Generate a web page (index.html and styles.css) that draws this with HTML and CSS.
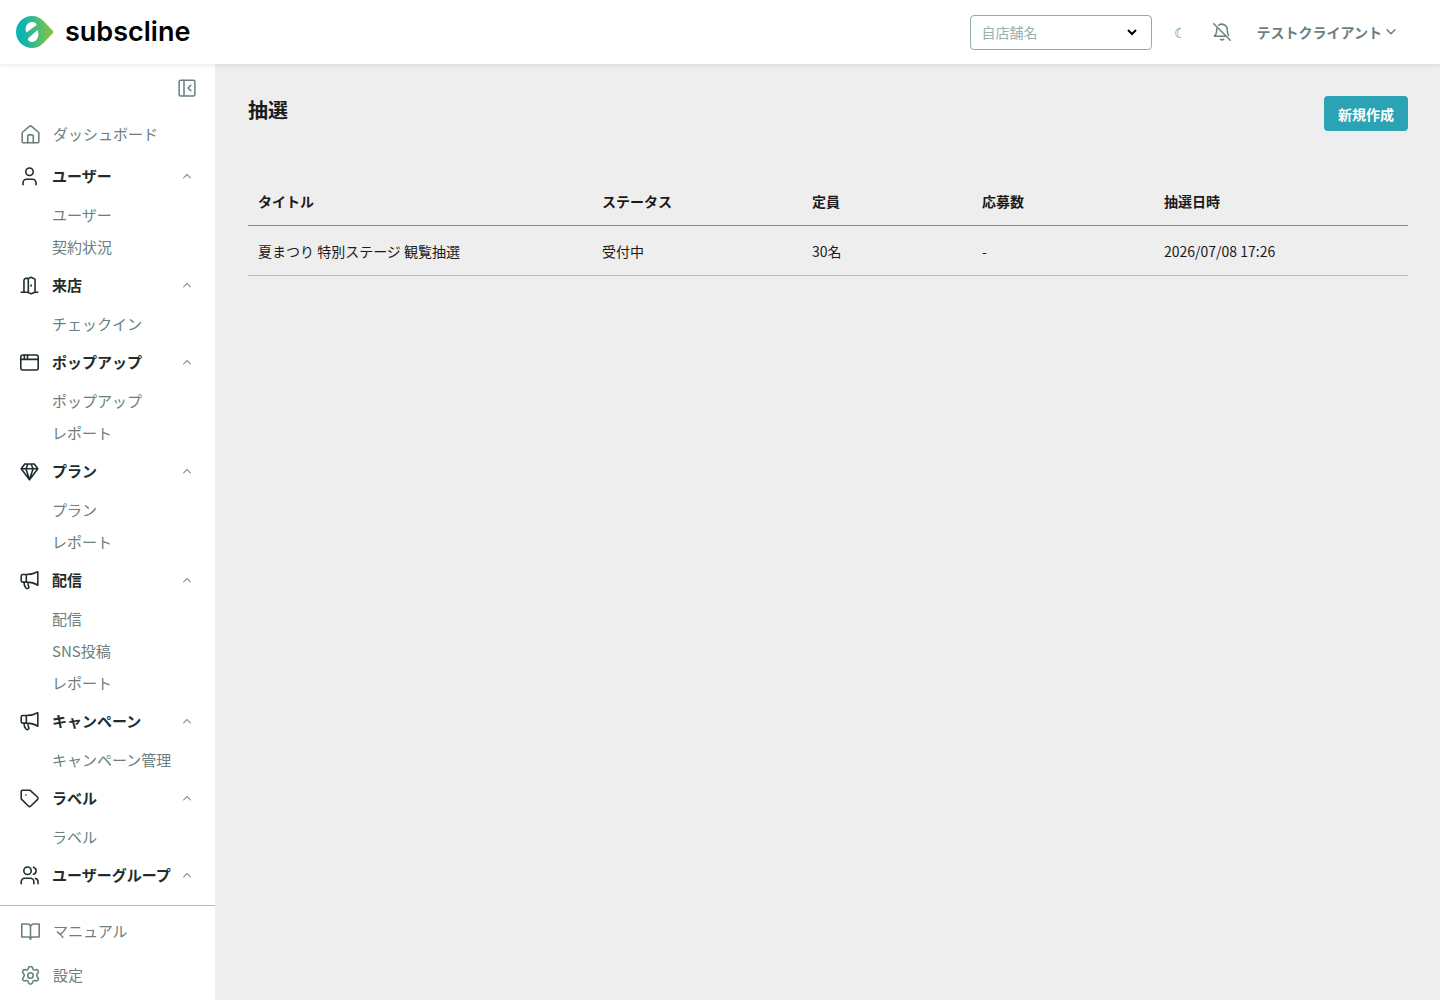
FILE: index.html
```html
<!DOCTYPE html>
<html lang="ja">
<head>
    <meta charset="UTF-8">
    <meta name="viewport" content="width=device-width, initial-scale=1.0">
    <title>抽選 | subscline</title>
    <link rel="stylesheet" href="styles.css">
</head>
<body>

    <!-- Icons -->
    <svg class="sprite" aria-hidden="true">
        <symbol id="icon-chevron" viewBox="0 0 24 24"><path d="M4 16.500l8-8 8 8"/></symbol>
        <symbol id="icon-home" viewBox="0 0 24 24"><path d="M1.500 9.500 10.600 1.700a2 2 0 0 1 2.800 0l9.100 7.800V21a1.500 1.500 0 0 1-1.500 1.500H3A1.500 1.500 0 0 1 1.500 21z"/><path d="M8.500 22.500V14a1.500 1.500 0 0 1 1.500-1.500h4a1.500 1.500 0 0 1 1.500 1.500v8.500"/></symbol>
        <symbol id="icon-user" viewBox="0 0 24 24"><circle cx="12" cy="6" r="4.700"/><path d="M3.800 22.500v-2.500a4.500 4.500 0 0 1 4.500-4.500h7.400a4.500 4.500 0 0 1 4.500 4.500v2.500"/></symbol>
        <symbol id="icon-door" viewBox="0 0 24 24"><path d="M1.500 20.500h9M19 20.500h3.500M5 20.500V5.500A2.500 2.500 0 0 1 7.500 3H10M11 3l3-1.500 5 2.500v16.500L14 22.500l-3.500-1.500V3.500"/><path d="M14 11.500v1"/></symbol>
        <symbol id="icon-window" viewBox="0 0 24 24"><rect x="1" y="2.500" width="22" height="19" rx="2.500"/><path d="M1 8h22M5.500 2.500V8M9.500 2.500V8"/></symbol>
        <symbol id="icon-gem" viewBox="0 0 24 24"><path d="M6 2.500h12l4.500 6L12 22.500 1.500 8.500zM1.500 8.500h21M10 2.500l-2.500 6 4.500 14 4.500-14-2.500-6"/></symbol>
        <symbol id="icon-megaphone" viewBox="0 0 24 24"><path d="M8 4.500H3.500a2 2 0 0 0-2 2V12a2 2 0 0 0 2 2H8M8 4.500C13 4.500 18 3.500 22.500 1v17C18 15 13 14 8 14zM8 4.500V14M5 14c0 2.500.8 5.500 2.500 7.500 1.500 1.500 4.500.2 3.500-1.900C10.200 18 10 16.500 10 14.500"/></symbol>
        <symbol id="icon-tag" viewBox="0 0 24 24"><path d="M12.500 1.500H3A1.500 1.500 0 0 0 1.500 3v9.500l9 9a2.300 2.300 0 0 0 3.200 0l8.300-8.100a2.300 2.300 0 0 0 0-3.300z"/><path d="M7.500 7.500v.2"/></symbol>
        <symbol id="icon-users" viewBox="0 0 24 24"><circle cx="9.500" cy="6" r="4.700"/><path d="M1.500 22.500v-2.500A4.500 4.500 0 0 1 6 15.500h7a4.500 4.500 0 0 1 4.500 4.500v2.500M22.800 22.500v-2.500a4.500 4.500 0 0 0-3.300-4.300M17 1.500a4.700 4.700 0 0 1 0 9"/></symbol>
        <symbol id="icon-book" viewBox="0 0 24 24"><path d="M1 2.500h7a4 4 0 0 1 4 4V22a3 3 0 0 0-3-3H1zM23 2.500h-7a4 4 0 0 0-4 4V22a3 3 0 0 1 3-3h8z"/></symbol>
        <symbol id="icon-gear" viewBox="0 0 24 24"><circle cx="12" cy="12" r="3.500"/><path d="M9.500 2.200c.8-2.200 4.200-2.200 5 0l.5 1.500a2 2 0 0 0 2.300 1.300l1.500-.3c2.400-.5 4.100 2.400 2.500 4.300l-1 1.300a2.300 2.300 0 0 0 0 2.800l1 1.300c1.600 1.900-.1 4.800-2.500 4.300l-1.500-.3a2 2 0 0 0-2.300 1.300l-.5 1.500c-.8 2.200-4.200 2.200-5 0l-.5-1.500a2 2 0 0 0-2.300-1.300l-1.500.3c-2.400.5-4.100-2.400-2.500-4.300l1-1.300a2.300 2.300 0 0 0 0-2.800l-1-1.300c-1.600-1.900.1-4.800 2.500-4.300l1.500.3a2 2 0 0 0 2.300-1.300z"/></symbol>
        <symbol id="icon-collapse" viewBox="0 0 24 24"><rect x="1.500" y="1.500" width="21" height="21" rx="2"/><path d="M8 1.500v21M17 8.500 13.500 12l3.500 3.500"/></symbol>
        <symbol id="icon-bell-off" viewBox="0 0 24 24"><path d="M1 1l22 22M7.500 3A7.200 7.200 0 0 1 19 8.500c0 3.500.3 5.500 1.500 8M5 7.500c0 4.500-.5 7.500-3 10h14.500M10 21.700c1 1.300 3 1.300 4 0"/></symbol>
    </svg>

    <!-- Header -->
    <header class="header">
        <a href="#" class="logo">
            <svg class="logo-mark" viewBox="0 0 38 32" aria-hidden="true">
                <defs>
                    <linearGradient id="logo-fill" x1="0" y1="0" x2="1" y2="0">
                        <stop offset="0.150" stop-color="#08b4b4"/>
                        <stop offset="1" stop-color="#8bc540"/>
                    </linearGradient>
                </defs>
                <path fill="url(#logo-fill)" d="M16 0c5 0 8.500 2 11.500 5l9 9.500a2 2 0 0 1 0 3L27.500 27C24.500 30 21 32 16 32A16 16 0 0 1 16 0z"/>
                <path fill="#fff" d="M10.500 16.500C8 11 11.500 6 16.500 6c2.500 0 4 1.500 4.200 3zM21.500 14C24 19.500 21 26 16 26c-2.500 0-4.300-1.800-4-3.500z"/>
            </svg>
            <span>subscline</span>
        </a>
        <div class="header-menu">
            <select class="store-select" aria-label="自店舗名">
                <option>自店舗名</option>
            </select>
            <button class="icon-button theme-button" aria-label="テーマ切替">☾</button>
            <button class="icon-button" aria-label="通知"><svg class="icon"><use href="#icon-bell-off"/></svg></button>
            <button class="account-button">テストクライアント<svg class="chevron down"><use href="#icon-chevron"/></svg></button>
        </div>
    </header>

    <div class="layout">
        <!-- Sidebar -->
        <aside class="sidebar">
            <div class="sidebar-top">
                <button class="icon-button" aria-label="メニューを閉じる"><svg class="icon"><use href="#icon-collapse"/></svg></button>
            </div>
            <nav class="menu">
                <a href="#" class="menu-link"><svg class="icon"><use href="#icon-home"/></svg>ダッシュボード</a>

                <button class="menu-head"><svg class="icon"><use href="#icon-user"/></svg>ユーザー<svg class="chevron"><use href="#icon-chevron"/></svg></button>
                <ul>
                    <li><a href="#">ユーザー</a></li>
                    <li><a href="#">契約状況</a></li>
                </ul>

                <button class="menu-head"><svg class="icon"><use href="#icon-door"/></svg>来店<svg class="chevron"><use href="#icon-chevron"/></svg></button>
                <ul>
                    <li><a href="#">チェックイン</a></li>
                </ul>

                <button class="menu-head"><svg class="icon"><use href="#icon-window"/></svg>ポップアップ<svg class="chevron"><use href="#icon-chevron"/></svg></button>
                <ul>
                    <li><a href="#">ポップアップ</a></li>
                    <li><a href="#">レポート</a></li>
                </ul>

                <button class="menu-head"><svg class="icon"><use href="#icon-gem"/></svg>プラン<svg class="chevron"><use href="#icon-chevron"/></svg></button>
                <ul>
                    <li><a href="#">プラン</a></li>
                    <li><a href="#">レポート</a></li>
                </ul>

                <button class="menu-head"><svg class="icon"><use href="#icon-megaphone"/></svg>配信<svg class="chevron"><use href="#icon-chevron"/></svg></button>
                <ul>
                    <li><a href="#">配信</a></li>
                    <li><a href="#">SNS投稿</a></li>
                    <li><a href="#">レポート</a></li>
                </ul>

                <button class="menu-head"><svg class="icon"><use href="#icon-megaphone"/></svg>キャンペーン<svg class="chevron"><use href="#icon-chevron"/></svg></button>
                <ul>
                    <li><a href="#">キャンペーン管理</a></li>
                </ul>

                <button class="menu-head"><svg class="icon"><use href="#icon-tag"/></svg>ラベル<svg class="chevron"><use href="#icon-chevron"/></svg></button>
                <ul>
                    <li><a href="#">ラベル</a></li>
                </ul>

                <button class="menu-head"><svg class="icon"><use href="#icon-users"/></svg>ユーザーグループ<svg class="chevron"><use href="#icon-chevron"/></svg></button>
            </nav>
            <div class="sidebar-bottom">
                <a href="#" class="menu-link"><svg class="icon"><use href="#icon-book"/></svg>マニュアル</a>
                <a href="#" class="menu-link"><svg class="icon"><use href="#icon-gear"/></svg>設定</a>
            </div>
        </aside>

        <!-- Main Content -->
        <main class="content">
            <div class="page-head">
                <h1>抽選</h1>
                <button class="create-button">新規作成</button>
            </div>
            <table>
                <thead>
                    <tr>
                        <th class="col-title">タイトル</th>
                        <th class="col-status">ステータス</th>
                        <th class="col-capacity">定員</th>
                        <th class="col-entries">応募数</th>
                        <th>抽選日時</th>
                    </tr>
                </thead>
                <tbody>
                    <tr>
                        <td>夏まつり 特別ステージ 観覧抽選</td>
                        <td>受付中</td>
                        <td>30名</td>
                        <td>-</td>
                        <td>2026/07/08 17:26</td>
                    </tr>
                </tbody>
            </table>
        </main>
    </div>

</body>
</html>
```
FILE: styles.css
```css
* {
    box-sizing: border-box;
}

body {
    margin: 0;
    height: 100vh;
    display: flex;
    flex-direction: column;
    background-color: #eee;
    color: #1a1a1a;
    font-family: "Noto Sans CJK JP", sans-serif;
    font-size: 14px;
    line-height: 20px;
}

button {
    border: none;
    background: none;
    padding: 0;
    color: inherit;
    font: inherit;
    cursor: pointer;
}

a {
    color: inherit;
    text-decoration: none;
}

/* Icons */
.sprite {
    display: none;
}

.icon,
.chevron {
    flex: none;
    width: 19px;
    height: 19px;
    fill: none;
    stroke: currentColor;
    stroke-width: 2;
    stroke-linecap: round;
    stroke-linejoin: round;
}

.chevron {
    width: 10px;
    height: 10px;
    stroke-width: 3;
}

.chevron.down {
    width: 12px;
    height: 12px;
    transform: rotate(180deg);
}

/* Header */
.header {
    flex: none;
    height: 64px;
    padding: 0 43px 0 16px;
    display: flex;
    align-items: center;
    justify-content: space-between;
    background-color: #fff;
    box-shadow: 0 1px 4px rgba(0, 0, 0, 0.1);
    z-index: 1;
}

.logo {
    display: flex;
    align-items: center;
    gap: 11px;
    color: #000;
    font-family: Inter, sans-serif;
    font-size: 27px;
    font-weight: 600;
}

.logo-mark {
    width: 38px;
    height: 32px;
}

.header-menu {
    display: flex;
    align-items: center;
    color: #6b7f80;
}

.store-select {
    width: 182px;
    height: 35px;
    margin-right: 19px;
    padding: 0 11px;
    appearance: none;
    border: 1px solid #93a9aa;
    border-radius: 4px;
    color: #9ab0b1;
    font: inherit;
    background: #fff url("data:image/svg+xml,%3Csvg xmlns='http://www.w3.org/2000/svg' width='10' height='10' viewBox='0 0 10 10'%3E%3Cpath d='M1 3l4 4 4-4' fill='none' stroke='%23000' stroke-width='2'/%3E%3C/svg%3E") no-repeat right 14px center;
}

.icon-button {
    display: flex;
    align-items: center;
    justify-content: center;
    width: 20px;
    height: 20px;
    color: #6b7f80;
}

.icon-button .icon {
    width: 18px;
    height: 18px;
}

.theme-button {
    margin-right: 21px;
}

.account-button {
    display: flex;
    align-items: center;
    gap: 3px;
    margin-left: 25px;
    font-weight: 700;
}

/* Sidebar */
.layout {
    flex: 1;
    min-height: 0;
    display: flex;
}

.sidebar {
    flex: none;
    width: 215px;
    display: flex;
    flex-direction: column;
    background-color: #fff;
    color: #6b7f80;
    font-size: 15px;
}

.sidebar-top {
    flex: none;
    height: 48px;
    padding: 0 18px;
    display: flex;
    align-items: center;
    justify-content: flex-end;
}

.menu {
    flex: 1;
    min-height: 0;
    overflow-y: auto;
    scrollbar-width: none;
}

.menu-link {
    display: flex;
    align-items: center;
    gap: 13px;
    height: 44px;
    padding: 0 21px;
}

.menu-head {
    display: flex;
    align-items: center;
    gap: 13px;
    width: 100%;
    height: 40px;
    padding: 0 23px 0 20px;
    color: #1f2d2e;
    font-weight: 700;
    white-space: nowrap;
}

.menu-head .chevron {
    margin-left: auto;
    color: #8b9a9b;
}

/* the longest label nearly reaches the chevron */
.menu-head {
    gap: 0;
}

.menu-head .icon {
    margin-right: 13px;
}

.menu ul {
    margin: 0;
    padding: 3px 0 2px;
    list-style: none;
}

.menu li a {
    display: block;
    padding: 0 52px;
    line-height: 32px;
    white-space: nowrap;
}

.menu li a:hover {
    color: #2ba3b5;
}

.sidebar-bottom {
    flex: none;
    padding: 3px 0;
    border-top: 1px solid #b0bfbf;
}

/* Main Content */
.content {
    flex: 1;
    min-width: 0;
    padding: 32px 32px 32px 33px;
    overflow-y: auto;
}

.page-head {
    display: flex;
    align-items: flex-start;
    justify-content: space-between;
    margin-bottom: 44px;
}

.page-head h1 {
    margin: 0;
    font-size: 20px;
    line-height: 28px;
}

.create-button {
    height: 35px;
    padding: 0 14px;
    border-radius: 4px;
    background-color: #2ba3b5;
    color: #fff;
    font-weight: 700;
}

table {
    width: 100%;
    border-collapse: collapse;
    table-layout: fixed;
}

th,
td {
    height: 50px;
    padding: 2px 10px 0;
    text-align: left;
    border-bottom: 1px solid #b5c0c0;
}

th {
    border-bottom-color: #7d8888;
}

.col-title {
    width: 344px;
}

.col-status {
    width: 210px;
}

.col-capacity {
    width: 170px;
}

.col-entries {
    width: 182px;
}
```
